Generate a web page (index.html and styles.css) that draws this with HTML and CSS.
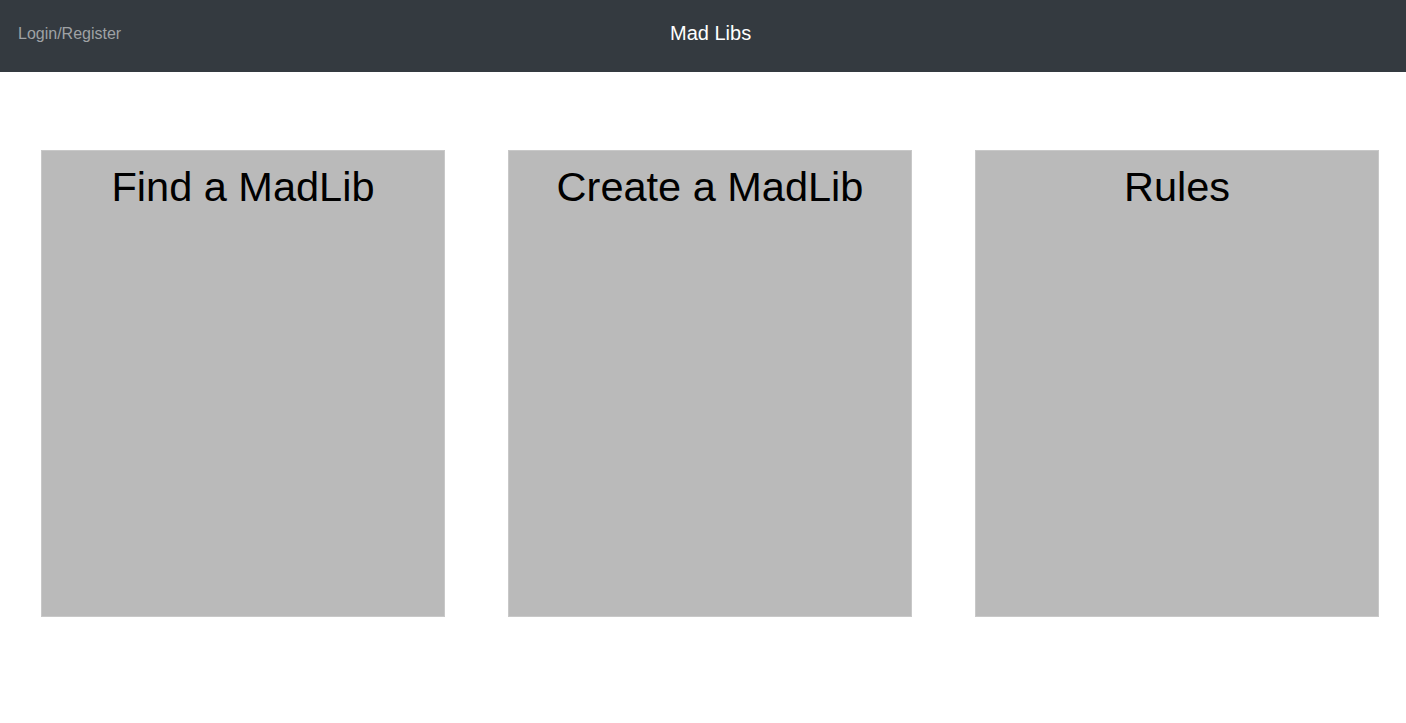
FILE: index.html
```html
<!DOCTYPE html>
<html>
<head>
<meta charset="utf-8">
<link rel="stylesheet" href="styles.css">
</head>
<body>
<nav class="navbar">
  <a class="nav-link" href="#">Login/Register</a>
  <span class="brand">Mad Libs</span>
</nav>
<main class="cards">
  <div class="card"><h2 class="card-title">Find a MadLib</h2></div>
  <div class="card"><h2 class="card-title">Create a MadLib</h2></div>
  <div class="card"><h2 class="card-title">Rules</h2></div>
</main>
</body>
</html>
```
FILE: styles.css
```css
html, body {
  margin: 0;
  padding: 0;
  background: #ffffff;
  font-family: "Liberation Sans", Arial, sans-serif;
}
.navbar {
  height: 72px;
  background: #343a40;
  display: flex;
  align-items: center;
  position: relative;
  padding: 0 18px;
  box-sizing: border-box;
}
.nav-link {
  color: #9fa2a5;
  font-size: 16px;
  text-decoration: none;
  margin-top: -4px;
}
.brand {
  position: absolute;
  left: 670px;
  top: 21px;
  color: #ffffff;
  font-size: 20px;
  line-height: 24px;
}
.cards {
  display: flex;
  gap: 63px;
  padding: 78px 0 0 41px;
}
.card {
  width: 402px;
  height: 465px;
  background: #bababa;
  border: 1px solid #c8c8c8;
  text-align: center;
}
.card-title {
  margin: 10px 0 0;
  font-weight: normal;
  font-size: 41.5px;
  line-height: 52px;
  color: #000000;
}
```
